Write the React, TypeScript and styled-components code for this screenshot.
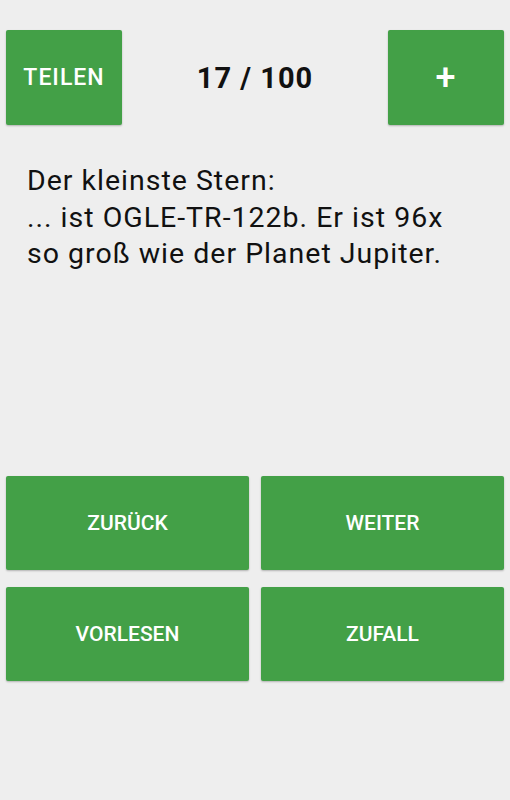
import React from 'react'
import styled, { createGlobalStyle } from 'styled-components'

const GREEN = '#43a047'

const GlobalStyle = createGlobalStyle`
  html, body {
    margin: 0;
    padding: 0;
    background: #eeeeee;
  }
  body {
    font-family: Roboto, 'Noto Sans', sans-serif;
  }
`

const Screen = styled.div`
  width: 510px;
  height: 800px;
  background: #eeeeee;
  display: flex;
  flex-direction: column;
  padding: 30px 6px 0;
  box-sizing: border-box;
`

const TopBar = styled.div`
  display: grid;
  grid-template-columns: 116px 1fr 116px;
  align-items: center;
  height: 95px;
`

const Button = styled.button<{ size?: number }>`
  border: none;
  border-radius: 2px;
  background: ${GREEN};
  color: #ffffff;
  font-family: Roboto, sans-serif;
  font-weight: 500;
  font-size: ${p => p.size ?? 21}px;
  letter-spacing: ${p => (p.size ? '1px' : '0')};
  text-transform: uppercase;
  box-shadow: 0 1px 2px rgba(0, 0, 0, 0.25);
  height: 100%;
  padding: 0;
  cursor: pointer;
  display: flex;
  align-items: center;
  justify-content: center;
`

const Counter = styled.div`
  text-align: center;
  font-size: 29px;
  letter-spacing: 1px;
  font-weight: 700;
  color: #111111;
`

const Fact = styled.p`
  margin: 38px 0 0;
  padding: 0 21px;
  font-size: 28.5px;
  letter-spacing: 1px;
  line-height: 36.5px;
  color: #111111;
  flex: 1;
`

const Grid = styled.div`
  display: grid;
  grid-template-columns: 1fr 1fr;
  grid-auto-rows: 94px;
  column-gap: 12px;
  row-gap: 17px;
  margin-bottom: 119px;
`

export default function App() {
  return (
    <Screen>
      <GlobalStyle />
      <TopBar>
        <Button size={23}>Teilen</Button>
        <Counter>17 / 100</Counter>
        <Button size={36}>+</Button>
      </TopBar>
      <Fact>
        Der kleinste Stern:
        <br />
        ... ist OGLE-TR-122b. Er ist 96x so groß wie der Planet Jupiter.
      </Fact>
      <Grid>
        <Button>Zurück</Button>
        <Button>Weiter</Button>
        <Button>Vorlesen</Button>
        <Button>Zufall</Button>
      </Grid>
    </Screen>
  )
}
